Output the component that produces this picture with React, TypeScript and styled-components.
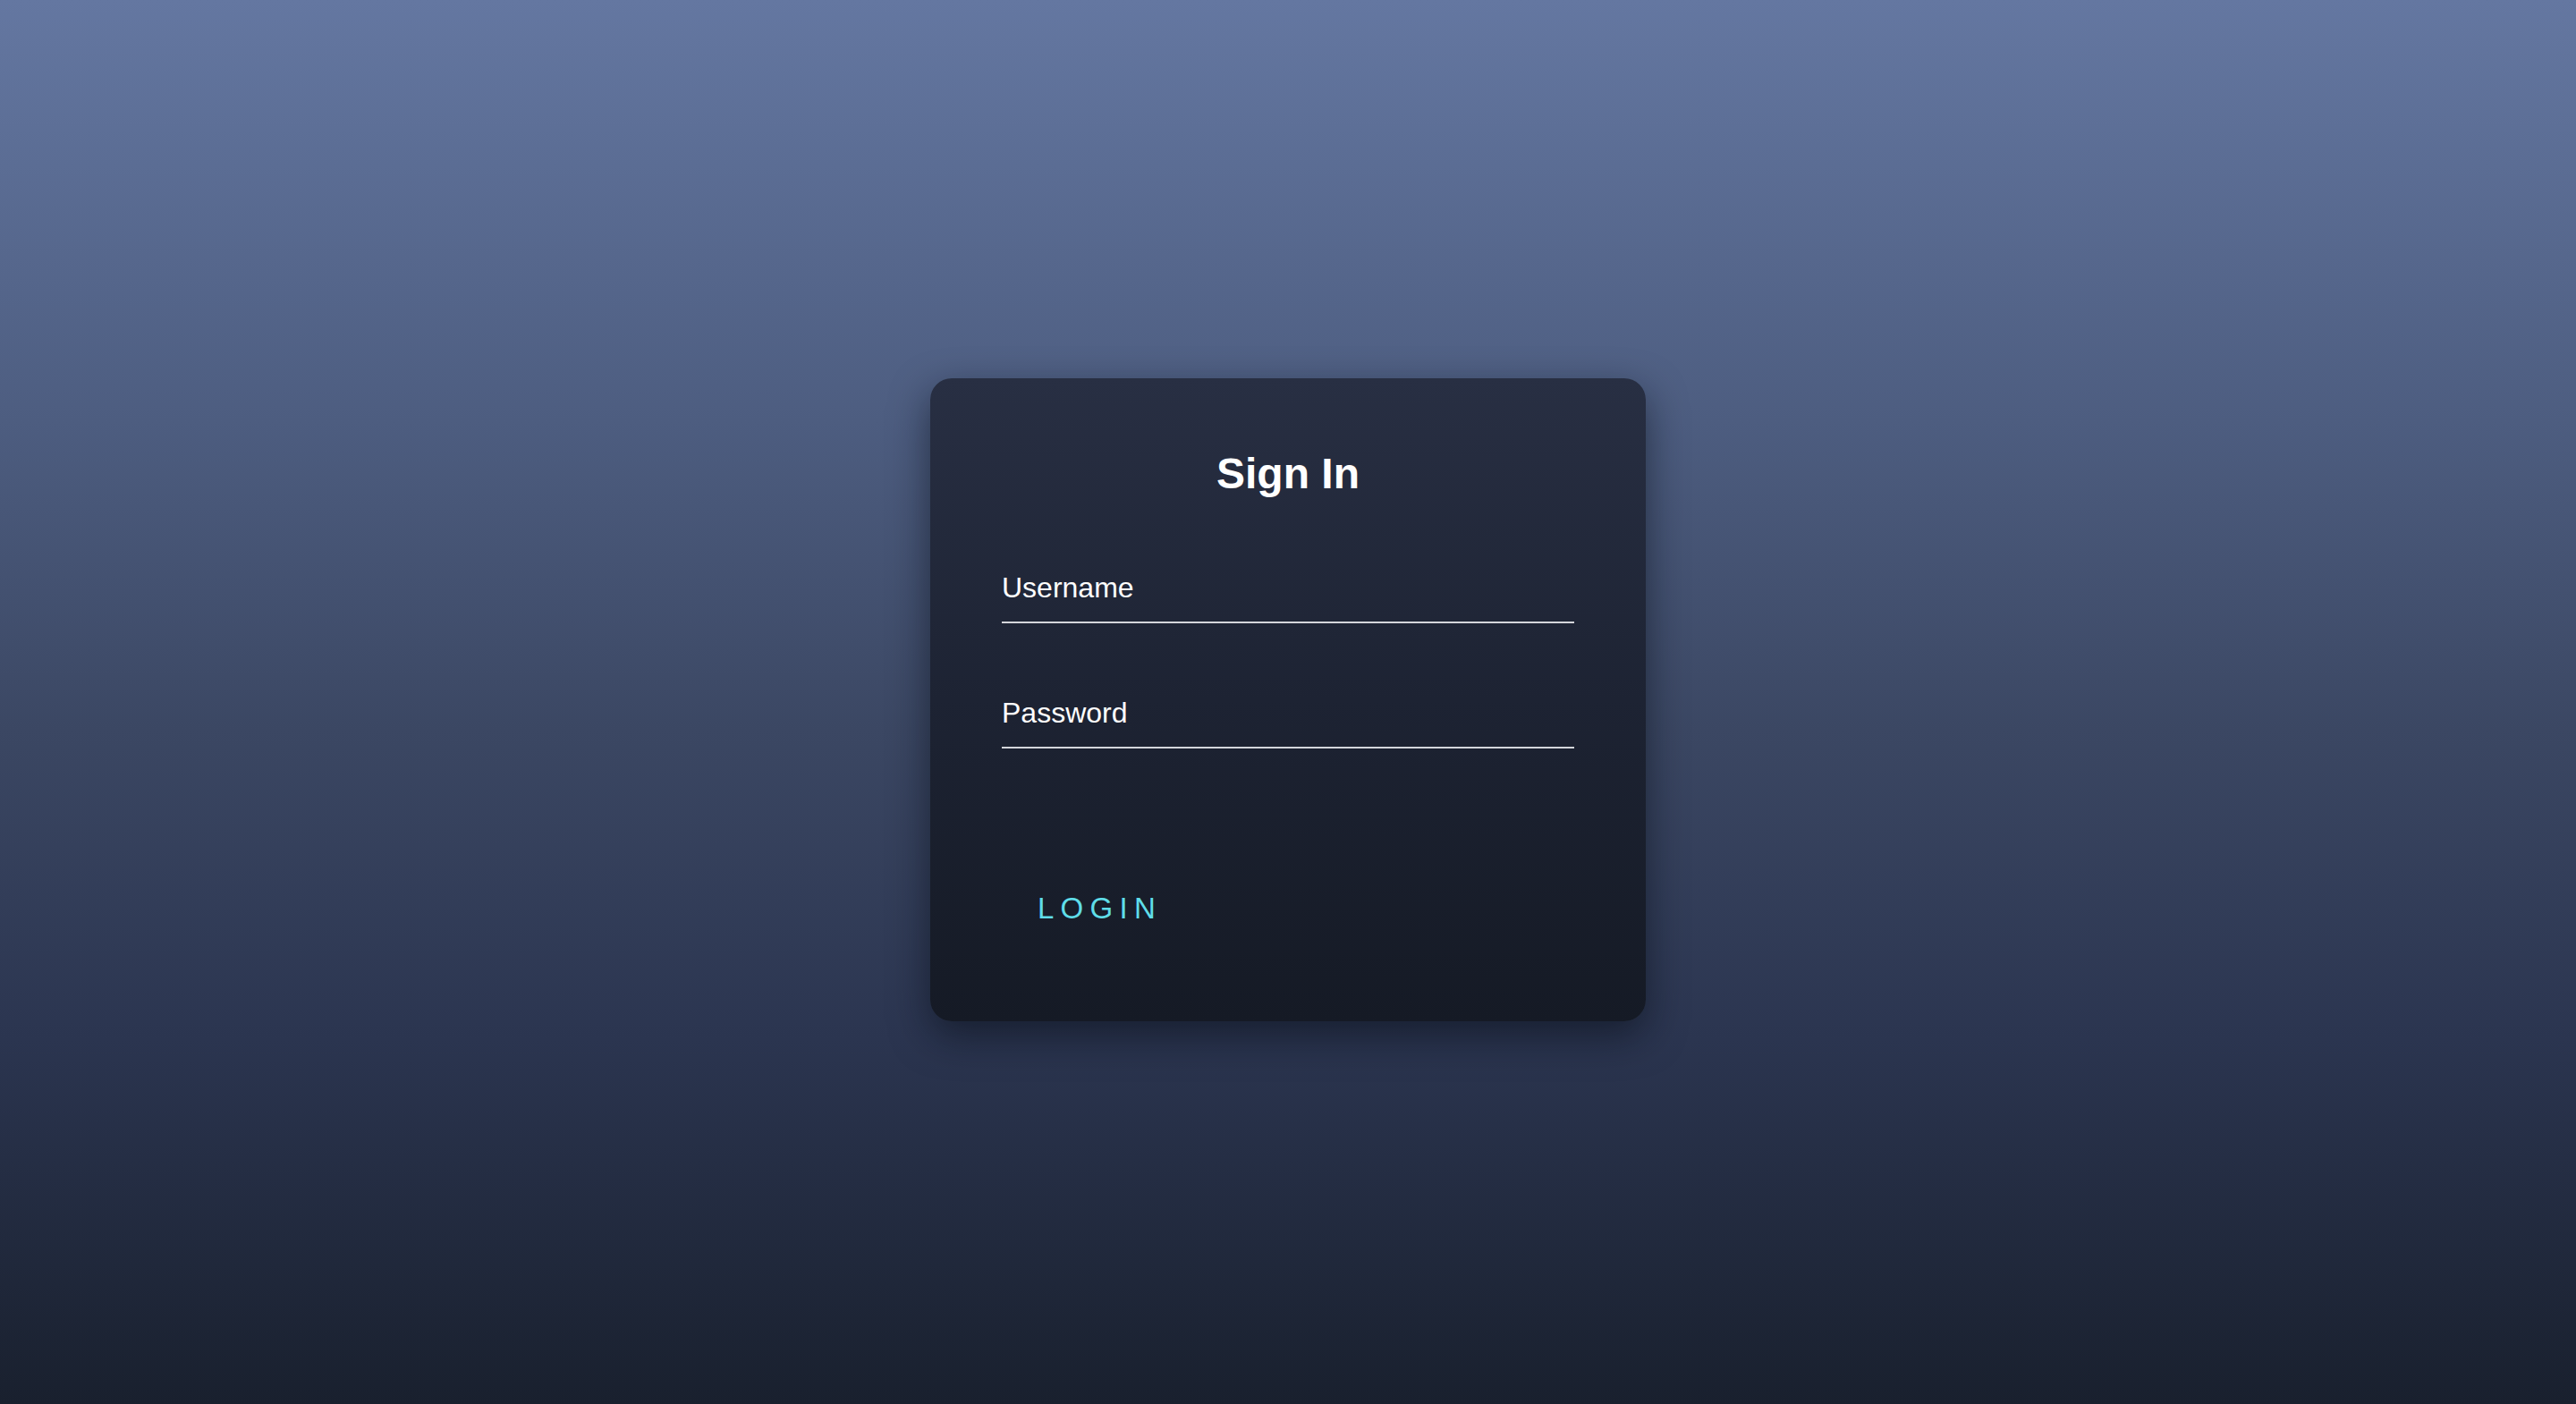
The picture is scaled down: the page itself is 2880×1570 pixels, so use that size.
import React from "react";
import styled, { createGlobalStyle } from "styled-components";

const GlobalStyle = createGlobalStyle`
  html, body {
    margin: 0;
    padding: 0;
    height: 100%;
  }
  body {
    font-family: "Liberation Sans", Arial, Helvetica, sans-serif;
    background: #1a2030;
  }
  * { box-sizing: border-box; }
`;

const Page = styled.main`
  min-height: 100vh;
  display: flex;
  align-items: center;
  justify-content: center;
  background: linear-gradient(180deg, #6477a1 0%, #4d5d80 30%, #3b4763 52%, #2b3550 74%, #19202e 100%);
`;

const Card = styled.form`
  width: 800px;
  display: flex;
  flex-direction: column;
  padding: 79px 80px 88px;
  margin-top: -6px;
  border-radius: 24px;
  background: linear-gradient(180deg, #282f43 0%, #1d2333 50%, #151a25 100%);
  box-shadow: 0 16px 44px rgba(8, 12, 22, 0.55);
`;

const Title = styled.h1`
  margin: 0 0 84px;
  font-size: 48px;
  line-height: 55px;
  font-weight: 700;
  color: #ffffff;
  text-align: center;
`;

const Input = styled.input<{ $gap?: number }>`
  display: block;
  width: 100%;
  margin: 0 0 ${(p) => p.$gap ?? 0}px;
  padding: 0 0 21px;
  border: none;
  border-bottom: 2px solid #d4d6db;
  background: transparent;
  font-family: "Liberation Sans", Arial, Helvetica, sans-serif;
  font-size: 32px;
  line-height: 33px;
  height: 56px;
  color: #ffffff;
  outline: none;
  &::placeholder {
    color: #ffffff;
    opacity: 1;
  }
`;

const LoginButton = styled.button`
  align-self: flex-start;
  margin-top: 140px;
  padding: 20px 40px;
  border: none;
  background: transparent;
  font-family: "Liberation Sans", Arial, Helvetica, sans-serif;
  font-size: 33px;
  line-height: 37px;
  letter-spacing: 0.22em;
  color: #5fdde9;
  cursor: pointer;
`;

export default function App() {
  return (
    <>
      <GlobalStyle />
      <Page>
        <Card onSubmit={(e) => e.preventDefault()}>
          <Title>Sign In</Title>
          <Input type="text" placeholder="Username" $gap={84} />
          <Input type="password" placeholder="Password" />
          <LoginButton type="submit">LOGIN</LoginButton>
        </Card>
      </Page>
    </>
  );
}
